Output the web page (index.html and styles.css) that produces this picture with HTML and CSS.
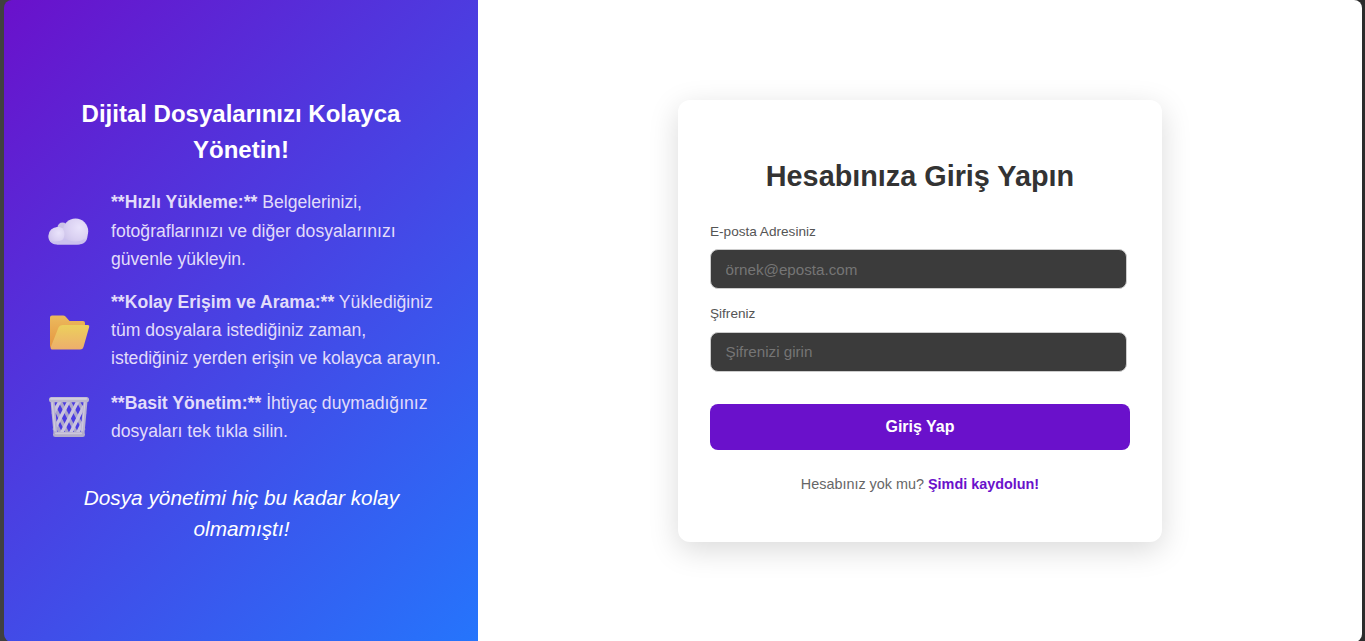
FILE: index.html
```html
<!DOCTYPE html>
<html lang="tr">
<head>
<meta charset="utf-8">
<title>Giriş</title>
<link rel="stylesheet" href="styles.css">
</head>
<body>
<main class="shell">
  <section class="promo">
    <h2 class="promo-title">Dijital Dosyalarınızı Kolayca<br>Yönetin!</h2>
    <ul class="features">
      <li class="feature">
        <svg class="feature-icon" viewBox="0.500 -0.500 44 44">
          <defs>
            <radialGradient id="puff" cx=".65" cy=".35" r=".75"><stop offset="0" stop-color="#e9e3fb"/><stop offset=".55" stop-color="#dcd3f3"/><stop offset="1" stop-color="#cdc3ea"/></radialGradient>
            <linearGradient id="base" x1="0" y1="0" x2="0" y2="1"><stop offset="0" stop-color="#ddd6f3"/><stop offset="1" stop-color="#c6b9ed"/></linearGradient>
          </defs>
          <circle cx="16" cy="18" r="5" fill="#cbc2e6"/>
          <path d="M11 35a9 9 0 0 1-1-17c5-.5 8 1 10 3l8-3 13 8c0 6-4 9-9 9z" fill="url(#base)"/>
          <circle cx="29" cy="21.800" r="12.700" fill="url(#puff)"/>
          <path d="M1.800 26.500a9.200 9.200 0 0 1 9.200-9c4 0 7 2.500 7 7 0 6-5 9-8 10-5 0-8.200-3-8.200-8z" fill="url(#puff)"/>
          <path d="M10 35c-3-.2-5-1.500-6.500-3.500 5 1 12 .5 15-2.500 6 4 15 4 20 0-1.500 4-4 6-8 6z" fill="#cbc1ee"/>
        </svg>
        <p class="feature-text"><b>**Hızlı Yükleme:**</b> Belgelerinizi,<br>fotoğraflarınızı ve diğer dosyalarınızı<br>güvenle yükleyin.</p>
      </li>
      <li class="feature">
        <svg class="feature-icon" viewBox="0 -1.500 44 44">
          <defs>
            <linearGradient id="back" x1="0" y1="0" x2="0" y2="1"><stop offset="0" stop-color="#ecba5d"/><stop offset="1" stop-color="#e5943f"/></linearGradient>
            <linearGradient id="front" x1="0" y1="0" x2="0" y2="1"><stop offset="0" stop-color="#ecd05c"/><stop offset="1" stop-color="#edae6c"/></linearGradient>
          </defs>
          <path d="M3 8q0-2 2-2h11q1.500 0 2.500 1l4 4.500H36q2 0 2 2v7L30 39H6q-3 0-3-3z" fill="url(#back)"/>
          <path d="M15.500 15.500H40.500q2.300 0 1.600 2.300L36.500 37.500q-.7 2.500-3.300 2.500H6q-3 0-2.200-2.600L11.500 18q1-2.500 4-2.500z" fill="url(#front)"/>
        </svg>
        <p class="feature-text"><b>**Kolay Erişim ve Arama:**</b> Yüklediğiniz<br>tüm dosyalara istediğiniz zaman,<br>istediğiniz yerden erişin ve kolayca arayın.</p>
      </li>
      <li class="feature">
        <svg class="feature-icon" viewBox="0 1 44 44">
          <g fill="none" stroke-width="3.400">
            <g stroke="#aca6ca"><path d="M7 12 21 40M13 7 30 40M22 7 37 36M31 7 38 20M8 28 14 40"/></g>
            <g stroke="#cac4e0"><path d="M37 12 23 40M31 7 14 40M22 7 7 36M13 7 6 20M36 28 30 40"/></g>
          </g>
          <path d="M5.500 7 8.500 39M38.500 7 35.500 39" stroke="#b9b3d0" stroke-width="4"/>
          <path d="M5 7 8 37M38 7 35 37" stroke="#d0cbe0" stroke-width="1.200"/>
          <rect x="2" y="3" width="40" height="5.200" rx="2.500" fill="#bbb6cf"/>
          <rect x="3" y="3.700" width="37" height="2" rx="1" fill="#d2cedf"/>
          <rect x="6" y="38" width="32" height="5" rx="2.300" fill="#b4adc9"/>
          <rect x="8" y="38.500" width="27" height="1.700" rx=".8" fill="#cdc7dc"/>
        </svg>
        <p class="feature-text"><b>**Basit Yönetim:**</b> İhtiyaç duymadığınız<br>dosyaları tek tıkla silin.</p>
      </li>
    </ul>
    <p class="tagline">Dosya yönetimi hiç bu kadar kolay<br>olmamıştı!</p>
  </section>
  <section class="login">
    <form class="card">
      <h1 class="card-title">Hesabınıza Giriş Yapın</h1>
      <label class="label" for="email">E-posta Adresiniz</label>
      <input class="input" id="email" type="email" placeholder="örnek@eposta.com">
      <label class="label" for="password">Şifreniz</label>
      <input class="input input-password" id="password" type="password" placeholder="Şifrenizi girin">
      <button class="submit" type="button">Giriş Yap</button>
      <p class="signup">Hesabınız yok mu? <a class="signup-link" href="#">Şimdi kaydolun!</a></p>
    </form>
  </section>
</main>
</body>
</html>
```
FILE: styles.css
```css
* { box-sizing: border-box; }
body {
  margin: 0;
  padding: 0 3px 0 4px;
  height: 641px;
  overflow: hidden;
  background: linear-gradient(90deg, #404040, #2c2c2c);
  font-family: "Liberation Sans", Arial, sans-serif;
}
.shell {
  display: flex;
  height: 642px;
  border-radius: 8px;
  overflow: hidden;
}
.promo {
  width: 474px;
  flex: none;
  padding: 96px 36px 0 43px;
  background: linear-gradient(135deg, #6a11cb 0%, #2575fc 100%);
  color: #fff;
  white-space: nowrap;
}
.promo-title {
  margin: 0 0 20.4px;
  padding-right: 7px;
  font-size: 24px;
  line-height: 36px;
  text-align: center;
}
.features {
  display: flex;
  flex-direction: column;
  gap: 15px;
  margin: 0;
  padding: 0;
  list-style: none;
}
.feature {
  display: flex;
  align-items: center;
  gap: 20px;
  min-height: 60px;
}
.feature-icon {
  width: 44px;
  height: 44px;
  flex: none;
}
.feature-text {
  margin: 0;
  font-size: 17.6px;
  line-height: 28.16px;
  color: #e2dcfa;
}
.tagline {
  margin: 35px 0 0;
  padding-right: 6px;
  font-size: 20.8px;
  line-height: 31px;
  font-style: italic;
  text-align: center;
}
.login {
  flex: 1;
  display: flex;
  justify-content: center;
  align-items: flex-start;
  padding-top: 100px;
  background: #fff;
}
.card {
  width: 484px;
  height: 442px;
  padding: 55px 32px 0;
  border-radius: 12px;
  background: #fff;
  box-shadow: 0 8px 30px rgba(0, 0, 0, .15);
}
.card-title {
  margin: 0 0 25px;
  font-size: 28.8px;
  line-height: 43px;
  text-align: center;
  color: #333;
}
.label {
  display: block;
  margin-bottom: 8px;
  font-size: 13.6px;
  line-height: 18px;
  color: #555;
}
.input {
  display: block;
  width: 417px;
  height: 40px;
  margin: 0 0 16px;
  padding: 0 14.5px;
  border: 1px solid #ccc;
  border-radius: 8px;
  background: #3b3b3b;
  color: #fff;
  font: 15.2px "Liberation Sans", Arial, sans-serif;
}
.input-password {
  margin-top: 9px;
  padding-bottom: 2px;
}
.input::placeholder { color: #757575; }
.submit {
  display: block;
  width: 420px;
  height: 46px;
  margin: 32px 0 0;
  border: 0;
  border-radius: 8px;
  background: #6a11cb;
  color: #fff;
  font: bold 16px "Liberation Sans", Arial, sans-serif;
}
.signup {
  margin: 24px 0 0;
  font-size: 14.4px;
  line-height: 21px;
  text-align: center;
  color: #666;
}
.signup-link {
  color: #6a11cb;
  font-weight: 700;
  text-decoration: none;
}
```
